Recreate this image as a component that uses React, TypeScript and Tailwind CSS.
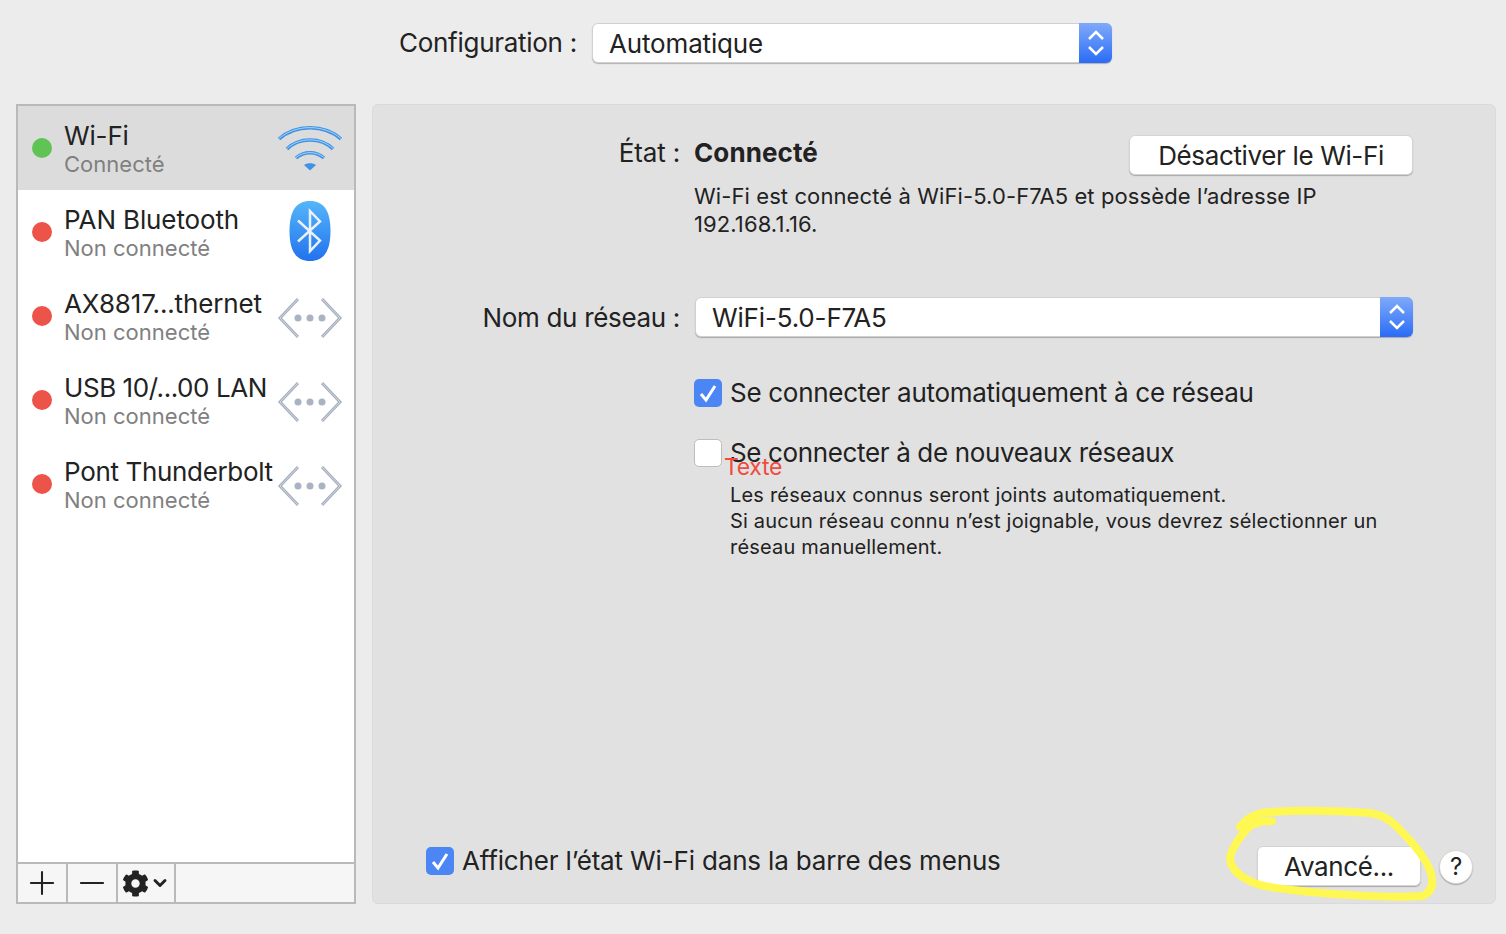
import React from 'react';
import { Plus, Minus, ChevronDown } from 'lucide-react';
import { FaCog } from 'react-icons/fa';

const services = [
  { name: 'PAN Bluetooth', icon: 'bt', tracking: 'tracking-[-0.12px]' },
  { name: 'AX8817...thernet', icon: 'eth', tracking: 'tracking-[-0.14px]' },
  { name: 'USB 10/...00 LAN', icon: 'eth', tracking: 'tracking-[-0.44px]' },
  { name: 'Pont Thunderbolt', icon: 'eth', tracking: 'tracking-[-0.34px]' },
];

function WifiIcon() {
  return (
    <svg width="66" height="50" viewBox="0 0 66 50" fill="none">
      <path d="M2 15C19 0 47 0 64 15" stroke="#3f93e6" strokeWidth="3.5" />
      <path d="M10 25C22 13 44 13 56 25" stroke="#3f93e6" strokeWidth="3.5" />
      <path d="M19 34C27 27 39 27 47 34" stroke="#3f93e6" strokeWidth="3.5" />
      <path d="M2 14.500C19 0 47 0 64 14.500M10 24.500C22 13 44 13 56 24.500M19 33.500C27 27 39 27 47 33.500" stroke="#a9d4f7" strokeWidth="1" />
      <path d="M27 41C30 38.500 36 38.500 39 41L33 46.500Z" fill="#3f93e6" />
    </svg>
  );
}

function BluetoothIcon() {
  return (
    <svg width="42" height="60" viewBox="0 0 42 60" fill="none">
      <defs>
        <linearGradient id="bt" x1="0" y1="0" x2="0" y2="1">
          <stop offset="0" stopColor="#55b6f8" />
          <stop offset="1" stopColor="#2272ee" />
        </linearGradient>
      </defs>
      <path d="M21 0C35 0 41.500 10 41.500 30C41.500 50 35 60 21 60C7 60 .5 50 .5 30C.5 10 7 0 21 0Z" fill="url(#bt)" />
      <path d="M9 19.500L31 39.500L21 50V10L31 20.500L9 40.500" stroke="#e8f1fc" strokeWidth="2.500" strokeLinejoin="miter" />
    </svg>
  );
}

function EthernetIcon() {
  return (
    <svg width="64" height="44" viewBox="0 0 64 44" fill="none">
      <path d="M20 3L2 22L20 41M44 3L62 22L44 41" stroke="#a5adbd" strokeWidth="3" />
      <path d="M20 3L2 22L20 41M44 3L62 22L44 41" stroke="#d5d9e1" strokeWidth="1" />
      <circle cx="20" cy="22" r="3.500" fill="#a9b3c4" />
      <circle cx="32" cy="22" r="3.500" fill="#a9b3c4" />
      <circle cx="44" cy="22" r="3.500" fill="#a9b3c4" />
    </svg>
  );
}

function Stepper() {
  return (
    <div className="w-[33px] self-stretch -my-px -mr-px shrink-0 rounded-r-[6px] bg-gradient-to-b from-[#7fa9fa] to-[#2a6bf6] flex items-center justify-center">
      <svg width="18" height="28" viewBox="0 0 18 28" fill="none" stroke="white" strokeWidth="2.500">
        <path d="M2 10L9 3L16 10M2 18L9 25L16 18" />
      </svg>
    </div>
  );
}

function Select({ value }: { value: string }) {
  return (
    <div className="h-10 flex items-center bg-white rounded-[6px] border border-[#d0d0d0] shadow-[0_1px_1px_rgba(0,0,0,0.25)]">
      <span className="flex-1 pl-4 text-[26px] text-[#222]">{value}</span>
      <Stepper />
    </div>
  );
}

function CheckBox({ checked }: { checked: boolean }) {
  if (!checked) {
    return <div className="w-7 h-7 shrink-0 bg-white rounded-[5px] border border-[#bdbdbd]" />;
  }
  return (
    <div className="w-7 h-7 shrink-0 bg-[#4c86f5] rounded-[5px] flex items-center justify-center">
      <svg width="20" height="20" viewBox="0 0 20 20" fill="none" stroke="white" strokeWidth="3">
        <path d="M3 11L8 17L17 3" />
      </svg>
    </div>
  );
}

function Button({ label, className }: { label: string; className: string }) {
  return (
    <div className={`flex items-center justify-center bg-white rounded-[6px] border border-[#d4d4d4] shadow-[0_1px_1px_rgba(0,0,0,0.25)] text-[26px] text-[#222] tracking-[-0.36px] ${className}`}>
      {label}
    </div>
  );
}

function ServiceRow({ name, status, dot, selected, icon, iconClass, tracking }: { name: string; status: string; dot: string; selected?: boolean; icon: React.ReactNode; iconClass: string; tracking?: string }) {
  return (
    <div className={`h-[84px] flex items-center pl-[14px] ${selected ? 'bg-[#dcdcdc]' : 'bg-white'}`}>
      <div className={`w-5 h-5 rounded-full shrink-0 ${dot}`} />
      <div className="ml-3 flex-1 min-w-0 -mt-[1px]">
        <div className={`text-[26px] leading-[32px] text-[#222] whitespace-nowrap ${tracking ?? ''}`}>{name}</div>
        <div className="text-[22px] leading-[24px] text-[#808080] tracking-[0.02px]">{status}</div>
      </div>
      <div className={`w-[66px] mr-[11px] shrink-0 flex justify-center ${iconClass}`}>{icon}</div>
    </div>
  );
}

export default function App() {
  return (
    <div className="relative w-[1506px] h-[934px] overflow-hidden bg-[#ececec] font-['Inter','Liberation_Sans',sans-serif] tracking-[-0.01em]">
      {/* Top location picker */}
      <div className="h-[104px] pt-[23px] flex items-start">
        <span className="ml-[399px] w-[193px] text-[26px] leading-10 text-[#222] tracking-[-0.28px]">Configuration :</span>
        <div className="w-[520px]">
          <Select value="Automatique" />
        </div>
      </div>

      <div className="flex gap-4 px-4 pr-[10px]">
        {/* Services list */}
        <div className="w-[340px] h-[800px] border-2 border-[#b9b9b9] bg-white flex flex-col">
          <ServiceRow name="Wi-Fi" status="Connecté" dot="bg-[#5fc454]" selected icon={<WifiIcon />} iconClass="mt-[2px]" />
          {services.map((s) => (
            <ServiceRow
              key={s.name}
              name={s.name}
              status="Non connecté"
              dot="bg-[#ec5449]"
              tracking={s.tracking}
              icon={s.icon === 'bt' ? <BluetoothIcon /> : <EthernetIcon />}
              iconClass={s.icon === 'bt' ? '-mt-[2px]' : 'mt-[3px]'}
            />
          ))}
          <div className="mt-auto h-10 border-t-2 border-[#b9b9b9] bg-[#f6f6f6] flex text-[#222]">
            <div className="w-[50px] border-r-2 border-[#b9b9b9] flex items-center justify-center">
              <Plus size={38} strokeWidth={1.3} />
            </div>
            <div className="w-[50px] border-r-2 border-[#b9b9b9] flex items-center justify-center">
              <Minus size={38} strokeWidth={1.3} />
            </div>
            <div className="w-[58px] border-r-2 border-[#b9b9b9] flex items-center justify-center gap-[1px]">
              <FaCog size={27} />
              <ChevronDown size={20} strokeWidth={3.5} />
            </div>
          </div>
        </div>

        {/* Detail panel */}
        <div className="flex-1 h-[800px] rounded-[6px] border border-[#dadada] bg-[#e1e1e1] text-[#222] flex flex-col pt-[30px] pr-[82px]">
          <div className="flex">
            <div className="w-[307px] text-right text-[26px] leading-9">État :</div>
            <div className="ml-[14px] flex-1 flex justify-between items-start">
              <div className="text-[26px] leading-9 font-bold tracking-[0.1px]">Connecté</div>
              <Button label="Désactiver le Wi-Fi" className="w-[284px] h-10" />
            </div>
          </div>
          <div className="ml-[321px] mt-[7px] text-[22px] leading-[28px] w-[690px] tracking-[0.1px]">
            Wi-Fi est connecté à WiFi-5.0-F7A5 et possède l’adresse IP 192.168.1.16.
          </div>
          <div className="flex items-center mt-[59px]">
            <div className="w-[307px] text-right text-[26px] tracking-[-0.32px]">Nom du réseau :</div>
            <div className="ml-[15px] flex-1">
              <Select value="WiFi-5.0-F7A5" />
            </div>
          </div>
          <div className="ml-[321px] mt-[40px] flex items-center gap-[8px] text-[26px] leading-8 tracking-[-0.29px]">
            <CheckBox checked />
            <span>Se connecter automatiquement à ce réseau</span>
          </div>
          <div className="ml-[321px] mt-[28px] flex items-center gap-[8px] text-[26px] leading-8 tracking-[-0.36px]">
            <CheckBox checked={false} />
            <span>Se connecter à de nouveaux réseaux</span>
          </div>
          <div className="ml-[357px] mt-[13px] text-[20px] leading-[26px] w-[680px] tracking-[0.19px]">
            <div>Les réseaux connus seront joints automatiquement.</div>
            <div>Si aucun réseau connu n’est joignable, vous devrez sélectionner un réseau manuellement.</div>
          </div>
          <div className="mt-auto mb-[16px] -mr-[60px] flex items-end">
            <div className="ml-[53px] flex-1 flex items-center gap-2 text-[26px] leading-8 mb-[10px]">
              <CheckBox checked />
              <span>Afficher l’état Wi-Fi dans la barre des menus</span>
            </div>
            <Button label="Avancé..." className="w-[164px] h-10 mb-[1px]" />
            <div className="ml-[18px] mb-[3px] w-[34px] h-[34px] rounded-full bg-white border border-[#d4d4d4] shadow-[0_1px_1px_rgba(0,0,0,0.25)] flex items-center justify-center text-[24px]">?</div>
          </div>
        </div>
      </div>

      {/* Annotations on top of the screenshot */}
      <div className="absolute left-[724px] top-[453px] text-[23px] leading-7 text-[#ef4b3f] tracking-[-0.3px]">Texte</div>
      <svg className="absolute left-0 top-0 pointer-events-none" width="1506" height="934" fill="none">
        <path
          d="M1240 827C1246 819 1254 813 1270 812C1300 810 1340 811 1370 813C1384 815 1392 821 1402 832C1414 844 1424 856 1430 870C1434 882 1433 892 1422 896C1390 898 1340 895 1310 892C1285 889 1262 888 1248 880C1236 874 1230 866 1230 857C1233 846 1240 836 1250 826C1256 822 1264 821 1272 821"
          stroke="#fff852"
          strokeWidth="8"
          strokeLinecap="round"
          strokeLinejoin="round"
        />
      </svg>
    </div>
  );
}
